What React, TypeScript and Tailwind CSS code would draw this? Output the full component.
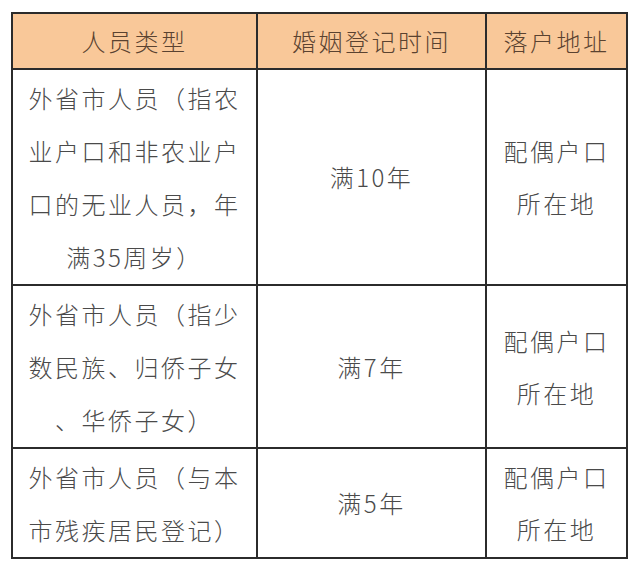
const FONT = "font-['Noto_Sans_CJK_SC','Noto_Sans',sans-serif]";

const ROWS = [
  {
    type: ['外省市人员（指农', '业户口和非农业户', '口的无业人员，年', '满35周岁）'],
    time: '满10年',
  },
  {
    type: ['外省市人员（指少', '数民族、归侨子女', '、华侨子女）'],
    time: '满7年',
  },
  {
    type: ['外省市人员（与本', '市残疾居民登记）'],
    time: '满5年',
  },
];

export default function App() {
  return (
    <div className={`w-[640px] h-[567px] bg-white pt-[12px] pl-[11px] ${FONT}`}>
      <table className="border-collapse border-2 border-[#2b2b2b] text-[24px] tracking-[2.5px] font-light">
        <thead>
          <tr className="bg-[#f9c899] text-[#5a4230] h-[56px]">
            <th className="w-[245px] border-2 border-[#2b2b2b] font-light text-center">人员类型</th>
            <th className="w-[229px] border-2 border-[#2b2b2b] font-light text-center">婚姻登记时间</th>
            <th className="w-[141px] border-2 border-[#2b2b2b] font-light text-center">落户地址</th>
          </tr>
        </thead>
        <tbody className="text-[#4a4a4a]">
          {ROWS.map((r, i) => (
            <tr key={i}>
              <td className="border-2 border-[#2b2b2b] text-center leading-[53px] py-[1px] whitespace-nowrap">
                {r.type.map((l, j) => (
                  <div key={j}>{l}</div>
                ))}
              </td>
              <td className="border-2 border-[#2b2b2b] text-center">{r.time}</td>
              <td className="border-2 border-[#2b2b2b] text-center leading-[52px]">
                <div>配偶户口</div>
                <div>所在地</div>
              </td>
            </tr>
          ))}
        </tbody>
      </table>
    </div>
  );
}
